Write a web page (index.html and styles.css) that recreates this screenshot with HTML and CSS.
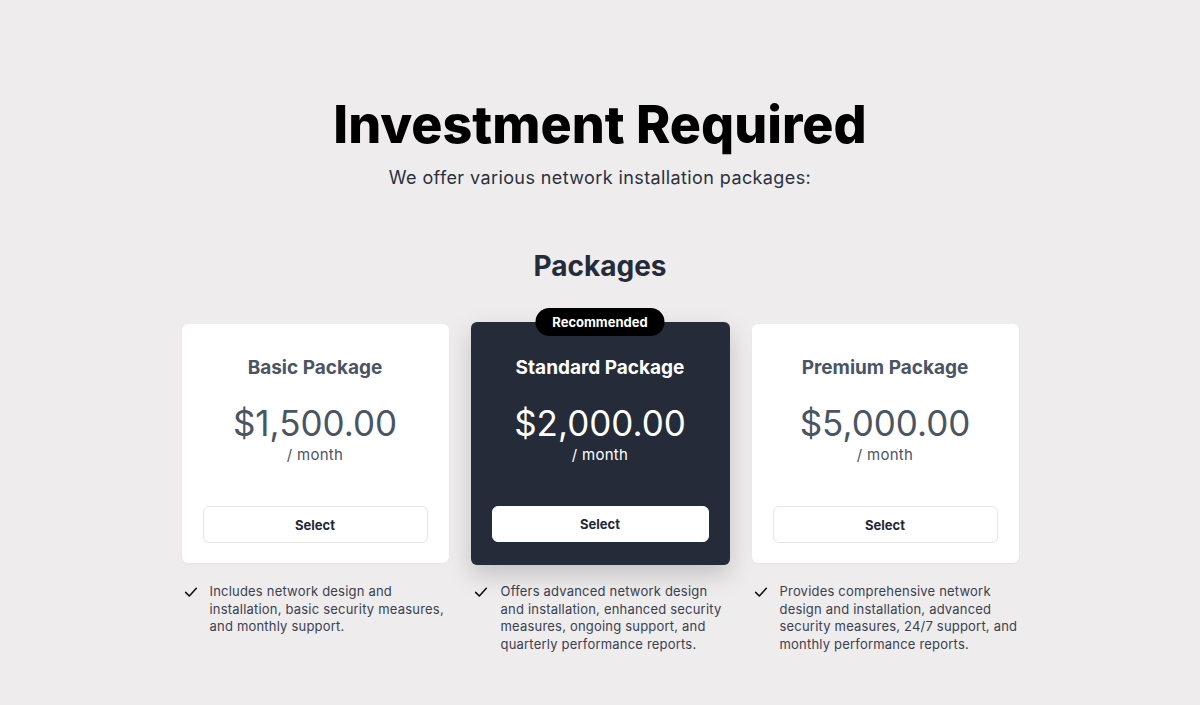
FILE: index.html
```html
<!DOCTYPE html>
<html lang="en">
<head>
	<meta charset="UTF-8">
	<title>Investment Required</title>
	<link rel="stylesheet" href="styles.css">
</head>
<body>
	<main class="page">
		<h1 class="title">Investment Required</h1>
		<p class="lead">We offer various network installation packages:</p>

		<h2 class="section-title">Packages</h2>

		<div class="plans">
			<div class="plan">
				<div class="card">
					<h3 class="card-name">Basic Package</h3>
					<div class="price">$1,500.00</div>
					<div class="period">/ month</div>
					<button class="btn">Select</button>
				</div>
				<ul class="features">
					<li>
						<svg class="check" viewBox="0 0 24 24"><polyline points="4 12.5 9.5 18 20 6.5"/></svg>
						<span>Includes network design and<br>installation, basic security measures,<br>and monthly support.</span>
					</li>
				</ul>
			</div>

			<div class="plan plan-featured">
				<div class="card card-dark">
					<span class="badge">Recommended</span>
					<h3 class="card-name">Standard Package</h3>
					<div class="price">$2,000.00</div>
					<div class="period">/ month</div>
					<button class="btn">Select</button>
				</div>
				<ul class="features">
					<li>
						<svg class="check" viewBox="0 0 24 24"><polyline points="4 12.5 9.5 18 20 6.5"/></svg>
						<span>Offers advanced network design<br>and installation, enhanced security<br>measures, ongoing support, and<br>quarterly performance reports.</span>
					</li>
				</ul>
			</div>

			<div class="plan">
				<div class="card">
					<h3 class="card-name">Premium Package</h3>
					<div class="price">$5,000.00</div>
					<div class="period">/ month</div>
					<button class="btn">Select</button>
				</div>
				<ul class="features">
					<li>
						<svg class="check" viewBox="0 0 24 24"><polyline points="4 12.5 9.5 18 20 6.5"/></svg>
						<span>Provides comprehensive network<br>design and installation, advanced<br>security measures, 24/7 support, and<br>monthly performance reports.</span>
					</li>
				</ul>
			</div>
		</div>
	</main>
</body>
</html>
```

FILE: styles.css
```css
body,h1,h2,h3,p,ul,li{margin:0;padding:0;}
ul{list-style-type: none;}
body{
	background: #eeecec;
	font-family: Inter, "Noto Sans", sans-serif;
	color: #1f2937;
}
.page{
	padding-top: 94px;
	text-align: center;
}
.title{
	font-size: 52px;
	line-height: 62px;
	font-weight: 800;
	color: #000;
}
.lead{
	margin-top: 8px;
	font-size: 18px;
	line-height: 28px;
	letter-spacing: 0.4px;
	color: #2b3040;
}
.section-title{
	margin-top: 56px;
	font-size: 28px;
	line-height: 36px;
	font-weight: 700;
	color: #252b3a;
}

.plans{
	display: grid;
	grid-template-columns: 267px 259px 267px;
	gap: 22px;
	justify-content: center;
	align-items: start;
	margin-top: 38px;
}
.plan{
	display: flex;
	flex-direction: column;
}

.card{
	position: relative;
	box-sizing: border-box;
	height: 239px;
	margin-top: 2px;
	padding: 30px 21px 0;
	background: #fff;
	border-radius: 6px;
	box-shadow: 0 1px 3px rgba(0,0,0,0.04);
	color: #4a5563;
}
.card-dark{
	height: 243px;
	margin-top: 0;
	padding-top: 32px;
	background: #252b39;
	color: #fff;
	box-shadow: 0 10px 24px rgba(0,0,0,0.18);
}
.badge{
	position: absolute;
	top: -14px;
	left: 50%;
	transform: translateX(-50%);
	width: 129px;
	height: 28px;
	line-height: 28px;
	background: #000;
	color: #fff;
	border-radius: 14px;
	font-size: 13px;
	font-weight: 700;
}
.card-name{
	font-size: 19px;
	line-height: 28px;
	font-weight: 700;
}
.price{
	margin-top: 19px;
	font-size: 35px;
	line-height: 44px;
	font-weight: 400;
}
.period{
	font-size: 15px;
	line-height: 20px;
	letter-spacing: 0.3px;
}
.btn{
	display: block;
	box-sizing: border-box;
	width: 100%;
	height: 37px;
	margin-top: 41px;
	background: #fff;
	border: 1px solid #e3e5e9;
	border-radius: 6px;
	font-family: inherit;
	font-size: 13px;
	font-weight: 700;
	color: #1f2937;
}
.card-dark .btn{
	height: 36px;
	border-color: #fff;
}

.features{
	margin-top: 20px;
	text-align: left;
}
.plan-featured .features{
	margin-top: 18px;
}
.features li{
	display: flex;
	align-items: flex-start;
	gap: 11px;
	padding-left: 1px;
	font-size: 13px;
	line-height: 17.5px;
	letter-spacing: 0.2px;
	color: #3b4150;
}
.plan-featured .features li{
	padding-left: 2px;
	gap: 12px;
}
.check{
	flex: none;
	width: 16px;
	height: 16px;
	margin-top: 1px;
	fill: none;
	stroke: #111;
	stroke-width: 2.4;
	stroke-linecap: round;
	stroke-linejoin: round;
}
```
